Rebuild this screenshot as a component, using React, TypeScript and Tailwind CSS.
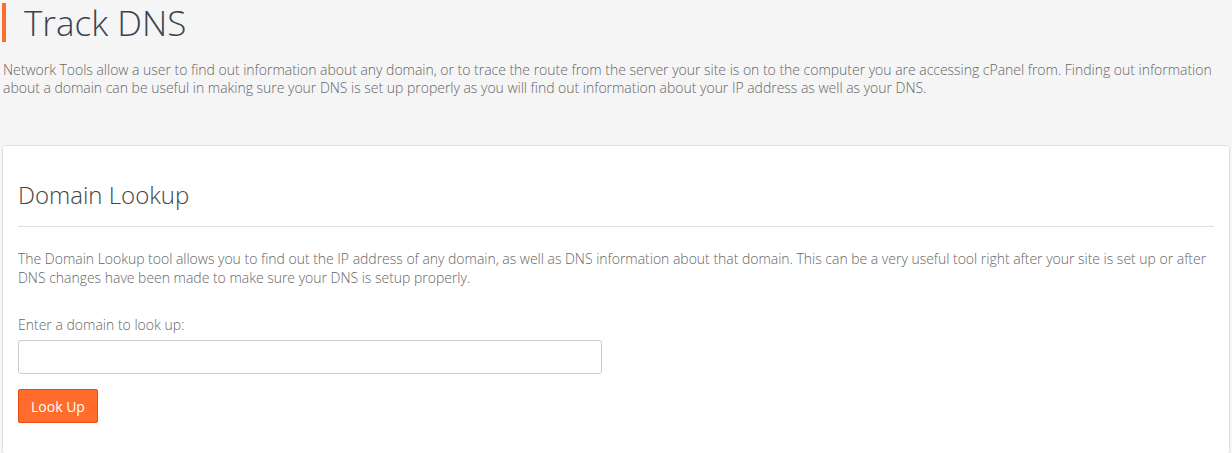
import React from "react";

export default function App() {
  return (
    <div
      className="min-h-[453px] w-full bg-[#f5f5f5] text-[#333]"
      style={{ fontFamily: '"Open Sans", "Liberation Sans", sans-serif' }}
    >
      <div className="px-[2px] pt-[3px]">
        <div className="flex items-center border-l-[4px] border-[#ff6c2c] pl-[18px] h-[39px]">
          <h1 className="text-[35px] font-light leading-[39px] text-[#3a4450] tracking-[0px]">Track DNS</h1>
        </div>
        <p className="mt-[19px] pl-[1px] text-[14px] font-light leading-[18px] text-[#666] tracking-[-0.02px]">
          Network Tools allow a user to find out information about any domain, or to trace the route from the server your site is on to the computer you are accessing cPanel from. Finding out information about a domain can be useful in making sure your DNS is set up properly as you will find out information about your IP address as well as your DNS.
        </p>
        <div className="mt-[48px] rounded-[3px] border border-[#dde3e3] bg-white px-[15px] pt-[35px] pb-[30px]">
          <h2 className="text-[24px] font-light leading-[28px] text-[#444]">Domain Lookup</h2>
          <div className="mt-[17px] h-px bg-[#dde3e3]" />
          <p className="mt-[22px] text-[14px] font-light leading-[19px] text-[#666] tracking-[-0.02px]">
            The Domain Lookup tool allows you to find out the IP address of any domain, as well as DNS information about that domain. This can be a very useful tool right after your site is set up or after DNS changes have been made to make sure your DNS is setup properly.
          </p>
          <label className="mt-[29px] block text-[14px] font-light leading-[18px] text-[#666]">Enter a domain to look up:</label>
          <input
            type="text"
            className="mt-[6px] block h-[34px] w-[584px] rounded-[3px] border border-[#ccc] bg-white px-3 outline-none"
          />
          <button className="mt-[15px] h-[34px] rounded-[2px] border border-[#e54a10] bg-[#ff6c2c] px-[12px] text-[14px] font-normal text-white">
            Look Up
          </button>
        </div>
      </div>
    </div>
  );
}
